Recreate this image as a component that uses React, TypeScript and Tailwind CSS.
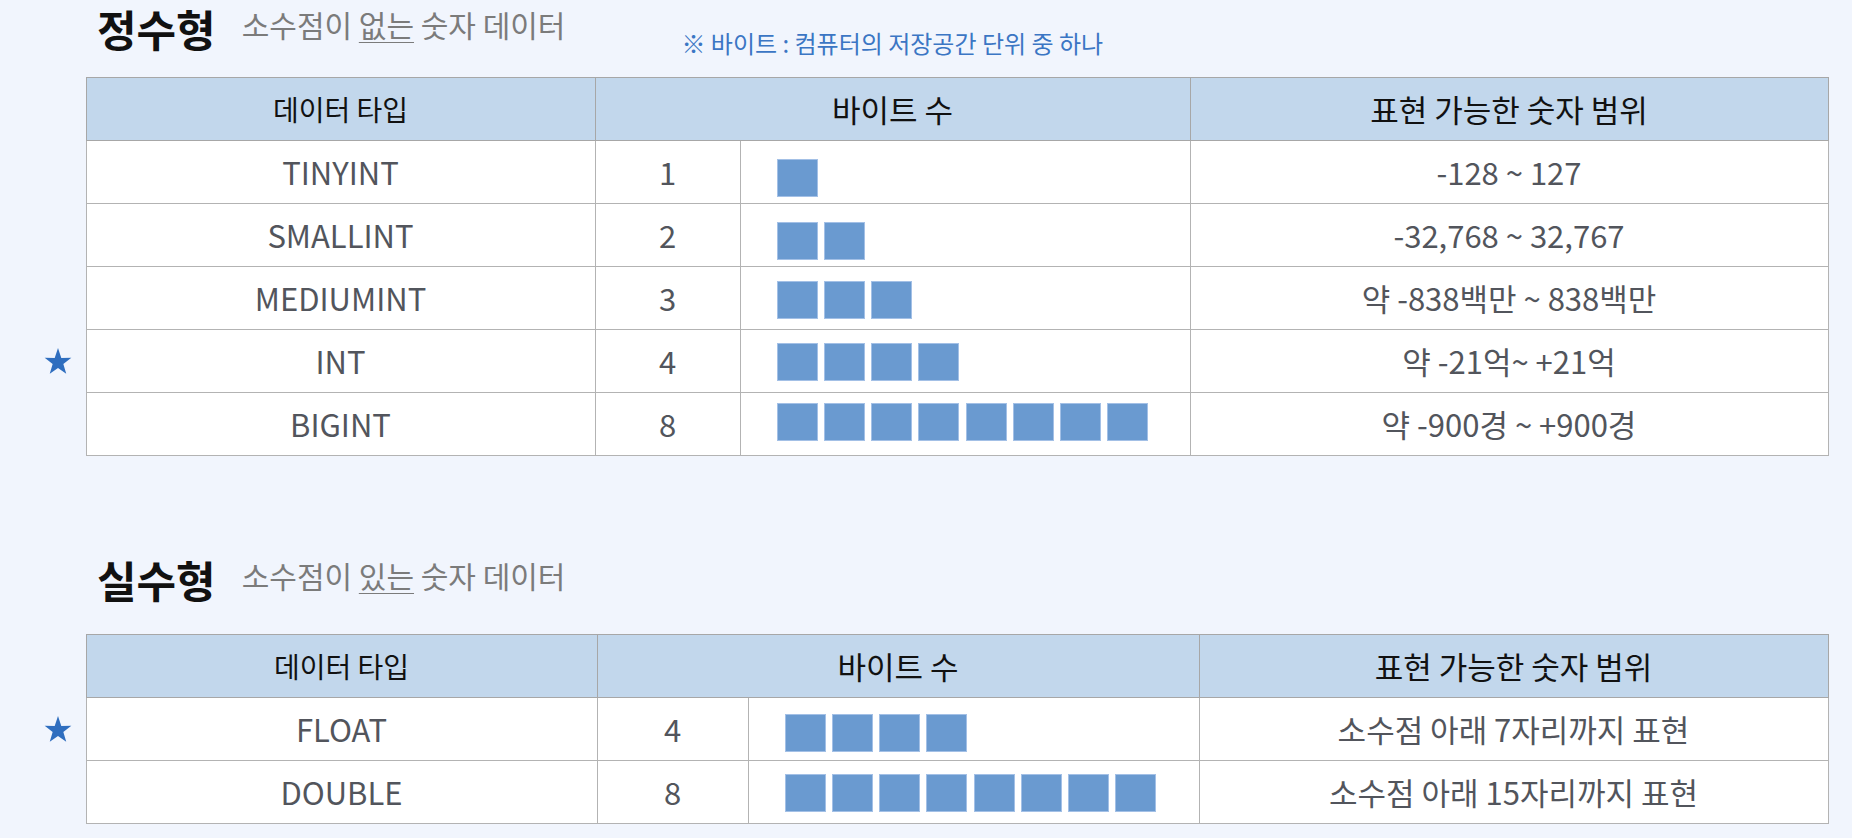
import React from 'react';

interface Row {
  name: string;
  bytes: number;
  range: string;
  pad: string;
  star?: boolean;
}

const intRows: Row[] = [
  { name: 'TINYINT', bytes: 1, range: '-128 ~ 127', pad: 'pt-[18px]' },
  { name: 'SMALLINT', bytes: 2, range: '-32,768 ~ 32,767', pad: 'pt-[18px]' },
  { name: 'MEDIUMINT', bytes: 3, range: '약 -838백만 ~ 838백만', pad: 'pt-[14px]' },
  { name: 'INT', bytes: 4, range: '약 -21억~ +21억', pad: 'pt-[13px]', star: true },
  { name: 'BIGINT', bytes: 8, range: '약 -900경 ~ +900경', pad: 'pt-[10px]' },
];

const floatRows: Row[] = [
  { name: 'FLOAT', bytes: 4, range: '소수점 아래 7자리까지 표현', pad: 'pt-[16px]', star: true },
  { name: 'DOUBLE', bytes: 8, range: '소수점 아래 15자리까지 표현', pad: 'pt-[13px]' },
];

const Star = () => (
  <svg width="28" height="27" viewBox="0 0 100 96" className="ml-[44px]">
    <polygon
      points="50,0 61.8,35.1 97.6,34.5 69.1,56.7 79.4,92 50,71 20.6,92 30.9,56.7 2.4,34.5 38.2,35.1"
      fill="#2f6ebf"
    />
  </svg>
);

const Bars: React.FC<{ n: number }> = ({ n }) => (
  <div className="flex gap-[6px]">
    {Array.from({ length: n }).map((_, i) => (
      <div
        key={i}
        className={
          i === 4
            ? 'ml-[1px] w-[41px] h-[38px] bg-[#6a9ad0] border border-[#a3c0e6]'
            : 'w-[41px] h-[38px] bg-[#6a9ad0] border border-[#a3c0e6]'
        }
      />
    ))}
  </div>
);

const SectionTitle: React.FC<{ title: string; pre: string; under: string; post: string; note?: boolean; height: string }> = ({
  title,
  pre,
  under,
  post,
  note,
  height,
}) => (
  <div className={`flex items-start pl-[97px] ${height}`}>
    <h2 className="mt-[2px] text-[43px] leading-tight font-bold text-[#111]">{title}</h2>
    <p className="ml-[26px] mt-[6px] text-[30px] leading-tight text-[#7b7b7b]">
      {pre}
      <span className="underline underline-offset-[5px] decoration-1">{under}</span>
      {post}
    </p>
    {note && (
      <p className="ml-[116px] mt-[28px] text-[24px] leading-tight text-[#3b76c4]">
        ※ 바이트 : 컴퓨터의 저장공간 단위 중 하나
      </p>
    )}
  </div>
);

const DataTable: React.FC<{ rows: Row[]; cols: string[] }> = ({ rows, cols }) => (
  <table className="table-fixed border-collapse">
    <colgroup>
      {cols.map((c, i) => (
        <col key={i} className={c} />
      ))}
    </colgroup>
    <thead>
      <tr className="h-[63px]">
        <th className="border-0" />
        <th className="border border-[#a7a7a7] bg-[#c2d7ec] text-[28px] font-normal text-[#111]">데이터 타입</th>
        <th colSpan={2} className="border border-[#a7a7a7] bg-[#c2d7ec] text-[31px] font-normal text-[#111]">
          바이트 수
        </th>
        <th className="border border-[#a7a7a7] bg-[#c2d7ec] text-[31px] font-normal text-[#111]">표현 가능한 숫자 범위</th>
      </tr>
    </thead>
    <tbody>
      {rows.map((r) => (
        <tr key={r.name} className="h-[63px] text-[31px] text-[#52555c]">
          <td className="border-0">{r.star && <Star />}</td>
          <td className="border border-[#b3b3b3] bg-white text-center">{r.name}</td>
          <td className="border border-[#b3b3b3] bg-white text-center">{r.bytes}</td>
          <td className={`border border-[#b3b3b3] bg-white align-top pl-[36px] ${r.pad}`}>
            <Bars n={r.bytes} />
          </td>
          <td className="border border-[#b3b3b3] bg-white text-center">{r.range}</td>
        </tr>
      ))}
    </tbody>
  </table>
);

export default function App() {
  return (
    <div className="min-h-screen w-full bg-[#f1f5fd] font-['Noto_Sans_CJK_KR','Noto_Sans',sans-serif]">
      <SectionTitle title="정수형" pre="소수점이 " under="없는" post=" 숫자 데이터" note height="h-[77px]" />
      <DataTable rows={intRows} cols={['w-[86px]', 'w-[509px]', 'w-[145px]', 'w-[450px]', 'w-[638px]']} />
      <div className="mt-[95px]">
        <SectionTitle title="실수형" pre="소수점이 " under="있는" post=" 숫자 데이터" height="h-[83px]" />
      </div>
      <DataTable rows={floatRows} cols={['w-[86px]', 'w-[511px]', 'w-[151px]', 'w-[451px]', 'w-[629px]']} />
    </div>
  );
}
